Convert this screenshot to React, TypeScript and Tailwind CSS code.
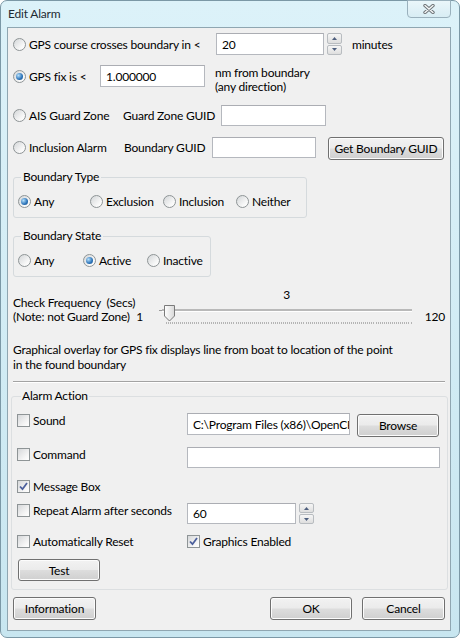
import React from "react";

const Radio = ({ checked = false }: { checked?: boolean }) => (
  <span className="w-[13px] h-[13px] shrink-0 rounded-full border border-[#8e9496] bg-[linear-gradient(135deg,#d3d6d8,#f8f8f8_70%,#ffffff)] flex items-center justify-center">
    {checked && (
      <span className="w-[7px] h-[7px] rounded-full bg-[radial-gradient(circle_at_35%_35%,#b6e0fb,#2a72b8_60%,#1a4f86)]"></span>
    )}
  </span>
);

const Check = ({ checked = false }: { checked?: boolean }) => (
  <span className="w-[13px] h-[13px] shrink-0 border border-[#8e9496] bg-[linear-gradient(135deg,#d6d8da,#f6f6f6_70%,#ffffff)] flex items-center justify-center">
    {checked && (
      <svg width="11" height="11" viewBox="0 0 11 11">
        <path d="M2 5.5 L4.5 8.2 L9 2" fill="none" stroke="#4b5f9c" strokeWidth="1.8" />
      </svg>
    )}
  </span>
);

const TextBox = ({ w, h, value = "" }: { w: string; h: string; value?: string }) => (
  <div className={`${w} ${h} shrink-0 border border-[#b5b8be] border-t-[#abadb3] bg-white flex items-center pl-[5px] overflow-hidden whitespace-nowrap`}>
    {value}
  </div>
);

const Spin = ({ h }: { h: string }) => (
  <div className={`${h} w-[15px] shrink-0 flex flex-col gap-[1px]`}>
    <div className="flex-1 border border-[#b8bcc0] rounded-[2px] bg-[linear-gradient(#f6f6f6,#dedede)] flex items-center justify-center">
      <svg width="5" height="3" viewBox="0 0 5 3">
        <path d="M0 3 L2.5 0 L5 3 Z" fill="#4e5f7e" />
      </svg>
    </div>
    <div className="flex-1 border border-[#b8bcc0] rounded-[2px] bg-[linear-gradient(#f6f6f6,#dedede)] flex items-center justify-center">
      <svg width="5" height="3" viewBox="0 0 5 3">
        <path d="M0 0 L5 0 L2.5 3 Z" fill="#4e5f7e" />
      </svg>
    </div>
  </div>
);

const Button = ({ className, children }: { className: string; children: React.ReactNode }) => (
  <div className={`${className} shrink-0 border border-[#707070] rounded-[3px] bg-[linear-gradient(#f2f2f2,#ebebeb_48%,#dddddd_52%,#cfcfcf)] shadow-[inset_0_0_0_1px_#fcfcfc] flex items-center justify-center`}>
    {children}
  </div>
);

const RadioItem = ({ label, checked, w }: { label: string; checked?: boolean; w?: string }) => (
  <div className={`${w ?? ""} flex items-center gap-[3px] h-[15px]`}>
    <Radio checked={checked} />
    <span>{label}</span>
  </div>
);

const CheckItem = ({ label, checked, w }: { label: string; checked?: boolean; w?: string }) => (
  <div className={`${w ?? ""} shrink-0 flex items-center gap-[3px] h-[15px]`}>
    <Check checked={checked} />
    <span>{label}</span>
  </div>
);

const Slider = () => {
  const ticks = Array.from({ length: 120 }, (_, i) => 8.5 + (i * 245) / 119);
  return (
    <svg width="260" height="23" viewBox="0 0 260 23">
      <line x1="2" y1="8.5" x2="5" y2="8.5" stroke="#9a9a9a" />
      <rect x="5" y="7" width="250" height="2" fill="#b9b9b9" />
      <line x1="5" y1="9.5" x2="255" y2="9.5" stroke="#ffffff" />
      {ticks.map((x, i) => (
        <line key={i} x1={Math.round(x) + 0.5} y1="20" x2={Math.round(x) + 0.5} y2="22" stroke="#b4b4b4" />
      ))}
      <defs>
        <linearGradient id="thumb" x1="0" y1="0" x2="1" y2="0">
          <stop offset="0" stopColor="#ffffff" />
          <stop offset="1" stopColor="#d8d8d8" />
        </linearGradient>
      </defs>
      <path d="M7.5 3.5 H17.5 V14 L12.5 19 L7.5 14 Z" fill="url(#thumb)" stroke="#7a7a7a" />
    </svg>
  );
};

export default function App() {
  return (
    <div className="w-[460px] h-[638px] bg-white font-['Lato',sans-serif] text-[12px] tracking-[-0.2px] leading-[15px] text-black whitespace-nowrap">
      <div className="w-[460px] h-[638px] rounded-[7px] border border-[#7b98a6] bg-[linear-gradient(#dcf2f9,#c8e6f0)] flex flex-col">
        {/* Title bar */}
        <div className="h-[26px] flex items-start justify-between pl-[7px] pr-[8px]">
          <span className="mt-[5px] text-[#1e2b33]">Edit Alarm</span>
          <div className="w-[44px] h-[18px] mt-[-1px] rounded-b-[4px] border border-[#9ab1bd] bg-[linear-gradient(#eaf6fa,#d8edf4)] flex items-center justify-center">
            <svg width="12" height="10" viewBox="0 0 12 10">
              <path d="M2 1.5 L10 8.5 M10 1.5 L2 8.5" stroke="#6e7478" strokeWidth="3.4" strokeLinecap="round" />
              <path d="M2 1.5 L10 8.5 M10 1.5 L2 8.5" stroke="#f6f8f9" strokeWidth="1.4" strokeLinecap="round" />
            </svg>
          </div>
        </div>

        {/* Client area */}
        <div className="ml-[6px] w-[444px] h-[604px] border border-[#8fa6b1] bg-[#f0f0f0] flex flex-col px-[5px]">
          {/* GPS course */}
          <div className="mt-[5px] h-[22px] flex items-center">
            <Radio />
            <span className="ml-[3px] w-[187px]">GPS course crosses boundary in &lt;</span>
            <TextBox w="w-[108px]" h="h-[22px]" value="20" />
            <div className="ml-[3px]">
              <Spin h="h-[22px]" />
            </div>
            <span className="ml-[10px]">minutes</span>
          </div>

          {/* GPS fix */}
          <div className="mt-[10px] h-[22px] flex items-start">
            <div className="h-[22px] flex items-center">
              <Radio checked />
              <span className="ml-[3px] w-[71px]">GPS fix is &lt;</span>
            </div>
            <TextBox w="w-[105px]" h="h-[22px]" value="1.000000" />
            <div className="ml-[10px] mt-[1px] leading-[14px]">
              <div>nm from boundary</div>
              <div>(any direction)</div>
            </div>
          </div>

          {/* AIS Guard Zone */}
          <div className="mt-[18px] h-[21px] flex items-center">
            <Radio />
            <span className="ml-[3px] w-[94px]">AIS Guard Zone</span>
            <span className="w-[98px]">Guard Zone GUID</span>
            <TextBox w="w-[105px]" h="h-[21px]" />
          </div>

          {/* Inclusion Alarm */}
          <div className="mt-[11px] h-[23px] flex items-start">
            <div className="h-[21px] flex items-center">
              <Radio />
              <span className="ml-[3px] w-[95px]">Inclusion Alarm</span>
              <span className="w-[88px]">Boundary GUID</span>
            </div>
            <TextBox w="w-[104px]" h="h-[21px]" />
            <Button className="ml-[12px] w-[116px] h-[23px]">Get Boundary GUID</Button>
          </div>

          {/* Boundary Type */}
          <fieldset className="mt-[9px] w-[294px] border border-[#d5dadd] rounded-[3px] pb-[8px] pl-[4px]">
            <legend className="ml-[3px] px-[2px] leading-[16px]">Boundary Type</legend>
            <div className="mt-[9px] flex">
              <RadioItem w="w-[72px]" label="Any" checked />
              <RadioItem w="w-[73px]" label="Exclusion" />
              <RadioItem w="w-[73px]" label="Inclusion" />
              <RadioItem label="Neither" />
            </div>
          </fieldset>

          {/* Boundary State */}
          <fieldset className="mt-[10px] w-[198px] border border-[#d5dadd] rounded-[3px] pb-[8px] pl-[4px]">
            <legend className="ml-[3px] px-[2px] leading-[16px]">Boundary State</legend>
            <div className="mt-[9px] flex">
              <RadioItem w="w-[65px]" label="Any" />
              <RadioItem w="w-[64px]" label="Active" checked />
              <RadioItem label="Inactive" />
            </div>
          </fieldset>

          {/* Check frequency */}
          <div className="mt-[11px] h-[37px] flex items-start leading-[14px]">
            <div className="mt-[8px] w-[133px] whitespace-pre">
              <div>Check Frequency  (Secs)</div>
              <div>(Note: not Guard Zone)</div>
            </div>
            <span className="mt-[22px] w-[22px]">1</span>
            <div className="w-[260px] flex flex-col">
              <div className="h-[14px] text-center">3</div>
              <Slider />
            </div>
            <span className="mt-[22px] ml-[8px]">120</span>
          </div>

          {/* Description */}
          <div className="mt-[17px]">
            Graphical overlay for GPS fix displays line from boat to location of the point
            <br />
            in the found boundary
          </div>

          <div className="mt-[9px] w-[432px] border-t border-b border-t-[#a3a3a3] border-b-white"></div>

          {/* Alarm Action */}
          <fieldset className="mt-[5px] ml-[-2px] w-[437px] border border-[#dcdfe1] rounded-[3px] pl-[5px] pb-[8px]">
            <legend className="ml-[4px] px-[1px] leading-[16px]">Alarm Action</legend>
            <div className="mt-[9px] flex items-start">
              <CheckItem w="w-[170px]" label="Sound" />
              <TextBox w="w-[163px]" h="h-[22px]" value="C:\Program Files (x86)\OpenCPN" />
              <Button className="ml-[7px] mt-[1px] w-[82px] h-[23px]">Browse</Button>
            </div>
            <div className="mt-[10px] flex items-start">
              <CheckItem w="w-[170px]" label="Command" />
              <TextBox w="w-[253px]" h="h-[21px]" />
            </div>
            <div className="mt-[11px] flex">
              <CheckItem label="Message Box" checked />
            </div>
            <div className="mt-[9px] flex items-start">
              <CheckItem w="w-[170px]" label="Repeat Alarm after seconds" />
              <TextBox w="w-[109px]" h="h-[21px]" value="60" />
              <div className="ml-[3px]">
                <Spin h="h-[21px]" />
              </div>
            </div>
            <div className="mt-[10px] flex">
              <CheckItem w="w-[170px]" label="Automatically Reset" />
              <CheckItem label="Graphics Enabled" checked />
            </div>
            <Button className="mt-[10px] ml-[1px] w-[82px] h-[22px]">Test</Button>
          </fieldset>

          {/* Bottom buttons */}
          <div className="mt-[7px] flex">
            <Button className="w-[83px] h-[23px]">Information</Button>
            <Button className="ml-auto w-[82px] h-[23px]">OK</Button>
            <Button className="ml-[10px] w-[83px] h-[23px]">Cancel</Button>
          </div>
        </div>
      </div>
    </div>
  );
}
